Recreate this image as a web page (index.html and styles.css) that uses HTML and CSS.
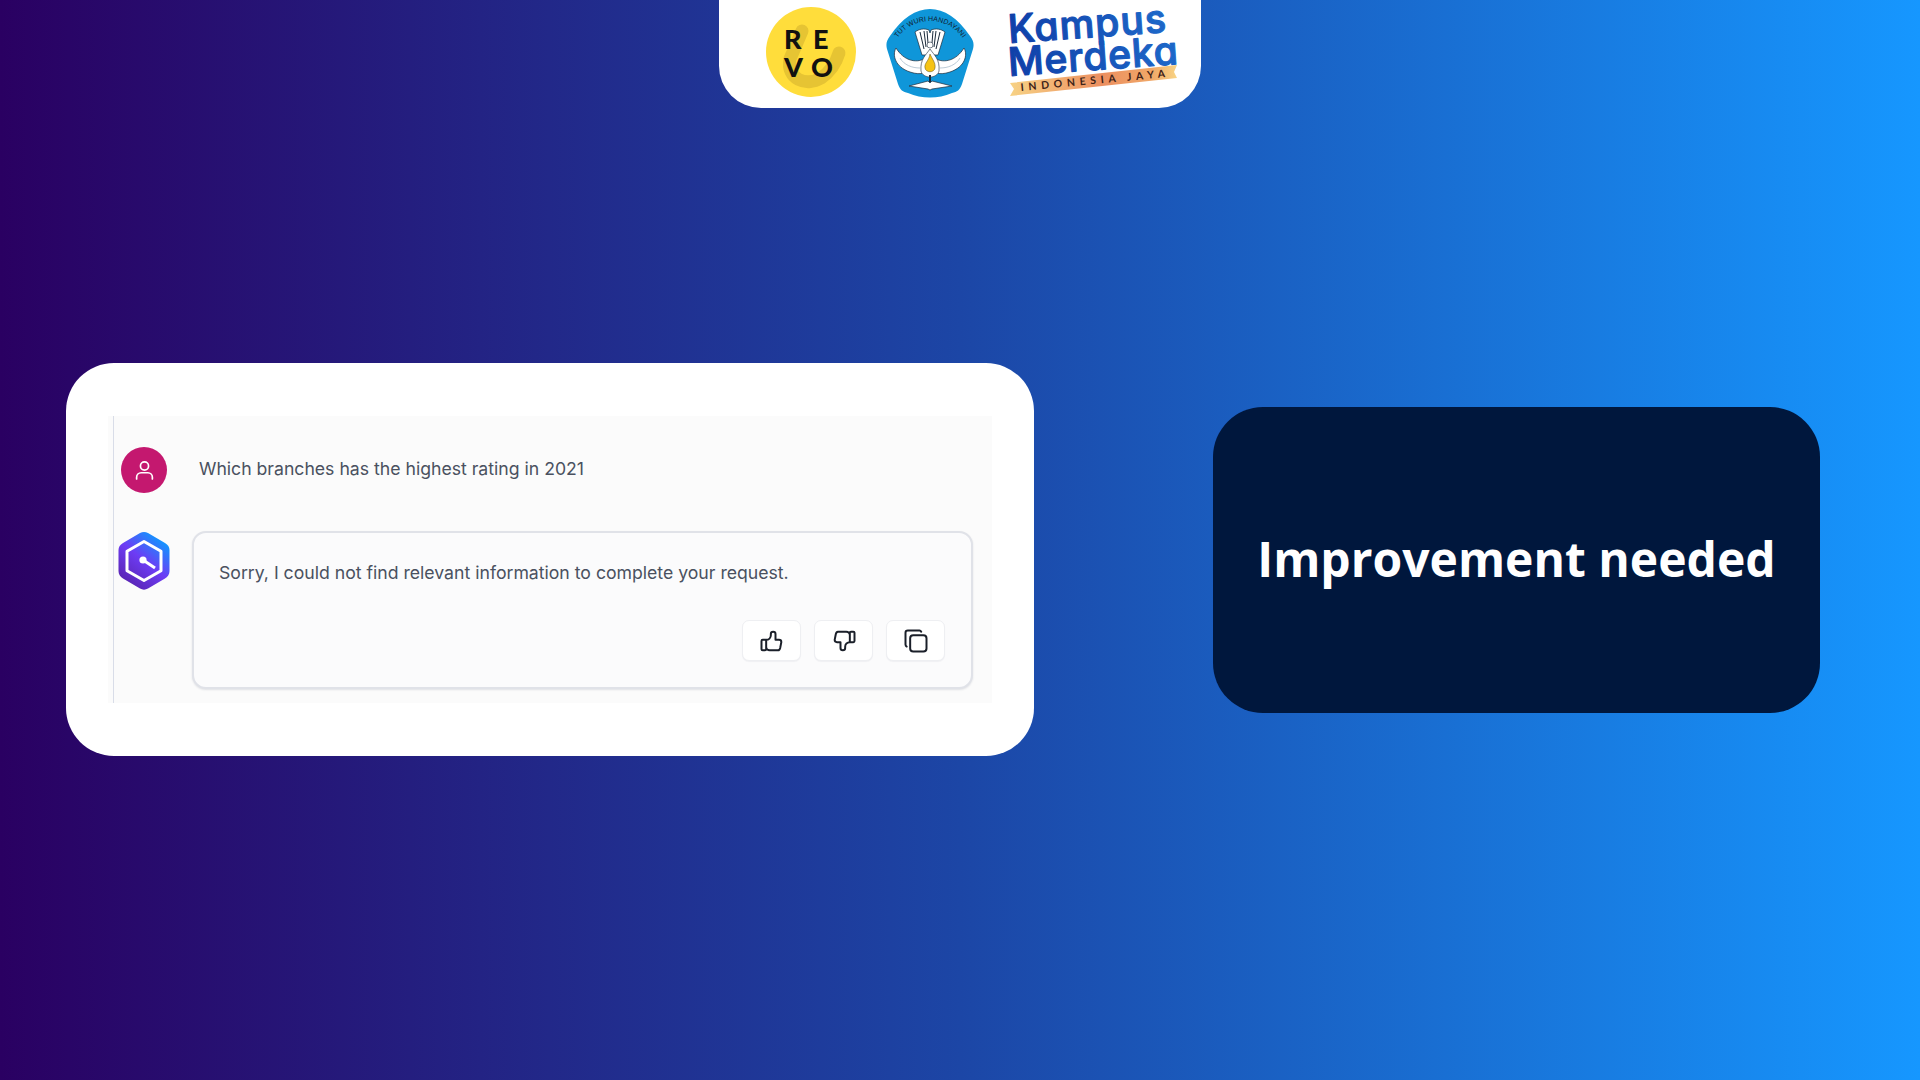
FILE: index.html
```html
<!DOCTYPE html>
<html lang="en">
<head>
<meta charset="utf-8">
<title>Improvement needed</title>
<link rel="stylesheet" href="styles.css">
</head>
<body>
<div class="stage">
  <header class="logos">
    <svg class="logo-revo" viewBox="0 0 90 90" width="90" height="90" aria-label="REVO">
      <defs>
        <linearGradient id="revoE" x1="0" y1="0" x2="0" y2="1"><stop offset="0.62" stop-color="#7d6e16"/><stop offset="0.7" stop-color="#111"/></linearGradient>
        <linearGradient id="revoO" x1="0" y1="0" x2="1" y2="0"><stop offset="0.5" stop-color="#111"/><stop offset="0.55" stop-color="#857518"/></linearGradient>
      </defs>
      <circle cx="45" cy="45" r="45" fill="#ffdd3b"/>
      <path d="M36 24 L24 52 C20 72 40 80 55 71 C64 65 70 56 73 46" fill="none" stroke="#e6c433" stroke-width="13" stroke-linecap="round"/>
      <text class="revo-text" x="18" y="42">R</text>
      <text class="revo-text" x="47" y="42" fill="url(#revoE)">E</text>
      <text class="revo-text" x="18" y="70">V</text>
      <text class="revo-text" x="45" y="70" fill="url(#revoO)">O</text>
    </svg>
    <svg class="logo-tut" viewBox="0 0 88 89" width="88" height="89" aria-label="Tut Wuri Handayani">
      <defs><path id="tutArc" d="M8 35 A39.700 39.700 0 0 1 80 35"/></defs>
      <path d="M44 0 C58 0 72 9 84 27 C88 32 88 36 87 40 L76 75 C74 81 71 83 66 84 C52 90 36 90 22 84 C17 83 14 81 12 75 L1 40 C0 36 0 32 4 27 C16 9 30 0 44 0 Z" fill="#0f96d9"/>
      <text class="tut-text"><textPath href="#tutArc" startOffset="50%" text-anchor="middle">TUT WURI HANDAYANI</textPath></text>
      <path d="M29 23 C33 20 38 19 43 21 L44 24 L45 21 C50 19 55 20 59 23 L52 46 L36 46 Z" fill="#fff" stroke="#1b2a3a" stroke-width="0.7"/>
      <path d="M34 23 L38 40 M38 22 L40 38 M41 22 L42 34 M54 23 L50 40 M50 22 L48 38 M47 22 L46 34" stroke="#1b2a3a" stroke-width="1" fill="none"/>
      <circle cx="44" cy="36" r="3" fill="#fff" stroke="#1b2a3a" stroke-width="0.6"/>
      <path d="M10 39 C6 46 9 58 24 63 C30 65 34 65 38 64 L38 50 C30 54 18 52 10 39 Z" fill="#fff" stroke="#1b2a3a" stroke-width="0.7"/>
      <path d="M78 39 C82 46 79 58 64 63 C58 65 54 65 50 64 L50 50 C58 54 70 52 78 39 Z" fill="#fff" stroke="#1b2a3a" stroke-width="0.7"/>
      <path d="M14 49 C18 56 26 59 34 59 M54 59 C62 59 70 56 74 49" fill="none" stroke="#9fb4c4" stroke-width="0.7"/>
      <path d="M35 62 C34 50 40 46 44 40 C48 46 54 50 53 62 C51 70 37 70 35 62 Z" fill="#fff" stroke="#1b2a3a" stroke-width="0.6"/>
      <path d="M44 45 C46 50 50 54 49 59 C48 64 40 64 39 59 C38 54 43 52 44 45 Z" fill="#f6c315" stroke="#5a4a10" stroke-width="0.5"/>
      <path d="M23 77 L42 72 L44 74 L46 72 L66 77 L46 80 L44 81 L42 80 Z" fill="#fff" stroke="#1b2a3a" stroke-width="0.7"/>
      <path d="M44 66 V73" stroke="#1b2a3a" stroke-width="2"/>
    </svg>
    <svg class="logo-kampus" viewBox="0 0 175 100" width="175" height="100" aria-label="Kampus Merdeka Indonesia Jaya">
      <defs>
        <linearGradient id="kmBlue" x1="0" y1="0" x2="1" y2="0"><stop offset="0" stop-color="#0f3fa8"/><stop offset="1" stop-color="#1d68c9"/></linearGradient>
        <linearGradient id="kmRibbon" x1="0" y1="0" x2="1" y2="0"><stop offset="0" stop-color="#f7d285"/><stop offset="0.55" stop-color="#ec8f60"/><stop offset="0.85" stop-color="#f0a868"/><stop offset="1" stop-color="#f8d485"/></linearGradient>
      </defs>
      <text class="km-title" transform="translate(3 43) rotate(-4)" textLength="158">Kampus</text>
      <text class="km-title" transform="translate(3 76) rotate(-4)" textLength="170">Merdeka</text>
      <path d="M4 83 L171 65 L168 72 L171 78 L4 96 L8 89 Z" fill="url(#kmRibbon)"/>
      <text class="km-sub" transform="translate(15 91) rotate(-5.500)" textLength="145">INDONESIA JAYA</text>
    </svg>
  </header>

  <main class="content">
    <section class="chat-card">
      <div class="chat-panel">
        <div class="thread">
          <div class="row row-user">
            <div class="avatar-col">
              <div class="avatar">
                <svg viewBox="0 0 24 24" width="27" height="27" fill="none" stroke="#fff" stroke-width="1.500" stroke-linecap="round"><circle cx="12" cy="8" r="3.600"/><path d="M5 19.500v-1.500a4 4 0 0 1 4-4h6a4 4 0 0 1 4 4v1.500"/></svg>
              </div>
            </div>
            <p class="question">Which branches has the highest rating in 2021</p>
          </div>
          <div class="row row-bot">
            <div class="avatar-col">
              <svg class="bot-logo" viewBox="0 0 52 60" width="52" height="60">
                <defs>
                  <linearGradient id="hexFill" x1="0.85" y1="0.1" x2="0.25" y2="0.95"><stop offset="0" stop-color="#0c9bff"/><stop offset="0.5" stop-color="#6d3cf5"/><stop offset="1" stop-color="#5a25b4"/></linearGradient>
                </defs>
                <path d="M22 2 C24.500 0.600 27.500 0.600 30 2 L47 12 C50 13.800 51.500 16 51.500 19 L51.500 40 C51.500 43.500 50 45.500 47 47.500 L30 57.500 C27.500 59 24.500 59 22 57.500 L5 47.500 C2 45.500 0.500 43.500 0.500 40 L0.500 19 C0.500 16 2 13.800 5 12 Z" fill="url(#hexFill)"/>
                <path d="M26 10.500 L43 20.300 L43 39.700 L26 49.500 L9 39.700 L9 20.300 Z" fill="none" stroke="#fff" stroke-width="3" stroke-linejoin="round"/>
                <path d="M25 29 L37 37" stroke="#fff" stroke-width="3"/>
                <circle cx="25" cy="29" r="3.600" fill="#fff"/>
              </svg>
            </div>
            <div class="answer">
              <p class="answer-text">Sorry, I could not find relevant information to complete your request.</p>
              <div class="actions">
                <button class="action" type="button" aria-label="Like">
                  <svg class="icon" viewBox="0 0 24 24"><path d="M7 11v8a1 1 0 0 1-1 1h-2a1 1 0 0 1-1-1v-7a1 1 0 0 1 1-1h3a4 4 0 0 0 4-4v-1a2 2 0 0 1 4 0v5h3a2 2 0 0 1 2 2l-1 5a2 3 0 0 1-2 2h-7a3 3 0 0 1-3-3"/></svg>
                </button>
                <button class="action" type="button" aria-label="Dislike">
                  <svg class="icon" viewBox="0 0 24 24"><path d="M17 13v-8a1 1 0 0 1 1-1h2a1 1 0 0 1 1 1v7a1 1 0 0 1-1 1h-3a4 4 0 0 0-4 4v1a2 2 0 0 1-4 0v-5h-3a2 2 0 0 1-2-2l1-5a2 3 0 0 1 2-2h7a3 3 0 0 1 3 3"/></svg>
                </button>
                <button class="action" type="button" aria-label="Copy">
                  <svg class="icon" viewBox="0 0 24 24"><path d="M7 9.667a2.667 2.667 0 0 1 2.667-2.667h8.666a2.667 2.667 0 0 1 2.667 2.667v8.666a2.667 2.667 0 0 1-2.667 2.667h-8.666a2.667 2.667 0 0 1-2.667-2.667z"/><path d="M4.012 16.737a2.005 2.005 0 0 1-1.012-1.737v-10c0-1.100 .9-2 2-2h10c.75 0 1.158 .385 1.500 1"/></svg>
                </button>
              </div>
            </div>
          </div>
        </div>
      </div>
    </section>
    <section class="verdict">
      <h1 class="verdict-text">Improvement needed</h1>
    </section>
  </main>
</div>
</body>
</html>
```

FILE: styles.css
```css
* { box-sizing: border-box; }
html, body { margin: 0; padding: 0; }
body { width: 1920px; height: 1080px; overflow: hidden; }

.stage {
  width: 1920px;
  height: 1080px;
  display: flex;
  flex-direction: column;
  background: linear-gradient(90deg, #2a0062 0%, #1c46a6 50%, #1697ff 100%);
}

.logos {
  align-self: flex-start;
  margin-left: 719px;
  width: 482px;
  height: 108px;
  flex: none;
  display: flex;
  align-items: flex-start;
  padding: 7px 0 0 47px;
  gap: 30px;
  background: #fff;
  border-radius: 0 0 42px 42px;
}
.logos svg { display: block; flex: none; }
.logo-tut { margin-top: 2px; }
.logo-kampus { margin-top: -7px; margin-left: 2px; }

.revo-text { font: 900 27px "Lato", "Liberation Sans", sans-serif; fill: #111; }
.tut-text { font: 400 7px "Liberation Sans", sans-serif; fill: #10202e; }
.km-title {
  font: 500 39px "Inter", "Liberation Sans", sans-serif;
  font-feature-settings: "cv11" 1;
  fill: url(#kmBlue);
  stroke: url(#kmBlue);
  stroke-width: 1.200px;
  stroke-linejoin: round;
}
.km-sub {
  font: 700 10.500px "Lato", "Liberation Sans", sans-serif;
  fill: #3d2218;
}

.content {
  display: flex;
  align-items: center;
  gap: 178px;
  margin-top: 255px;
  padding-left: 66px;
}

.chat-card {
  width: 968px;
  height: 393px;
  flex: none;
  padding: 53px 42px 53px;
  background: #fff;
  border-radius: 48px;
}
.chat-panel {
  height: 287px;
  padding-left: 5px;
  background: #fbfbfb;
}
.thread {
  height: 100%;
  padding: 31px 0 0 4px;
  border-left: 1px solid #d9dde8;
  display: flex;
  flex-direction: column;
  gap: 38px;
}
.row { display: flex; gap: 22px; }
.row-user { align-items: flex-start; }
.avatar-col { width: 52px; flex: none; display: flex; justify-content: center; }
.avatar {
  width: 46px;
  height: 46px;
  border-radius: 50%;
  background: #c4186f;
  display: flex;
  align-items: center;
  justify-content: center;
}
.bot-logo { display: block; }

.question, .answer-text {
  margin: 0;
  font: 400 17.650px/24px "Inter", "Liberation Sans", sans-serif;
  color: #4a5160;
}
.question { padding: 10px 0 0 7px; }

.answer {
  width: 781px;
  height: 158px;
  flex: none;
  display: flex;
  flex-direction: column;
  justify-content: space-between;
  padding: 28px 26px 26px 25px;
  border: 2px solid #e0e2e8;
  border-radius: 14px;
  background: #fbfbfc;
  box-shadow: 0 1px 2px rgba(30, 40, 70, 0.12);
}
.actions { display: flex; justify-content: flex-end; gap: 13px; }
.action {
  width: 59px;
  height: 41px;
  padding: 0;
  display: flex;
  align-items: center;
  justify-content: center;
  background: #fff;
  border: 1px solid #eeeff2;
  border-radius: 7px;
  box-shadow: 0 1px 1px rgba(30, 40, 70, 0.05);
}
.icon {
  width: 28px;
  height: 28px;
  fill: none;
  stroke: #1a1f29;
  stroke-width: 1.700;
  stroke-linecap: round;
  stroke-linejoin: round;
}

.verdict {
  width: 607px;
  height: 306px;
  flex: none;
  display: flex;
  align-items: center;
  justify-content: center;
  padding-bottom: 1px;
  background: #00173d;
  border-radius: 50px;
  margin-left: 1px;
}
.verdict-text {
  margin: 0;
  font: 700 48px/1.2 "Open Sans", "Liberation Sans", sans-serif;
  color: #fff;
}
```
